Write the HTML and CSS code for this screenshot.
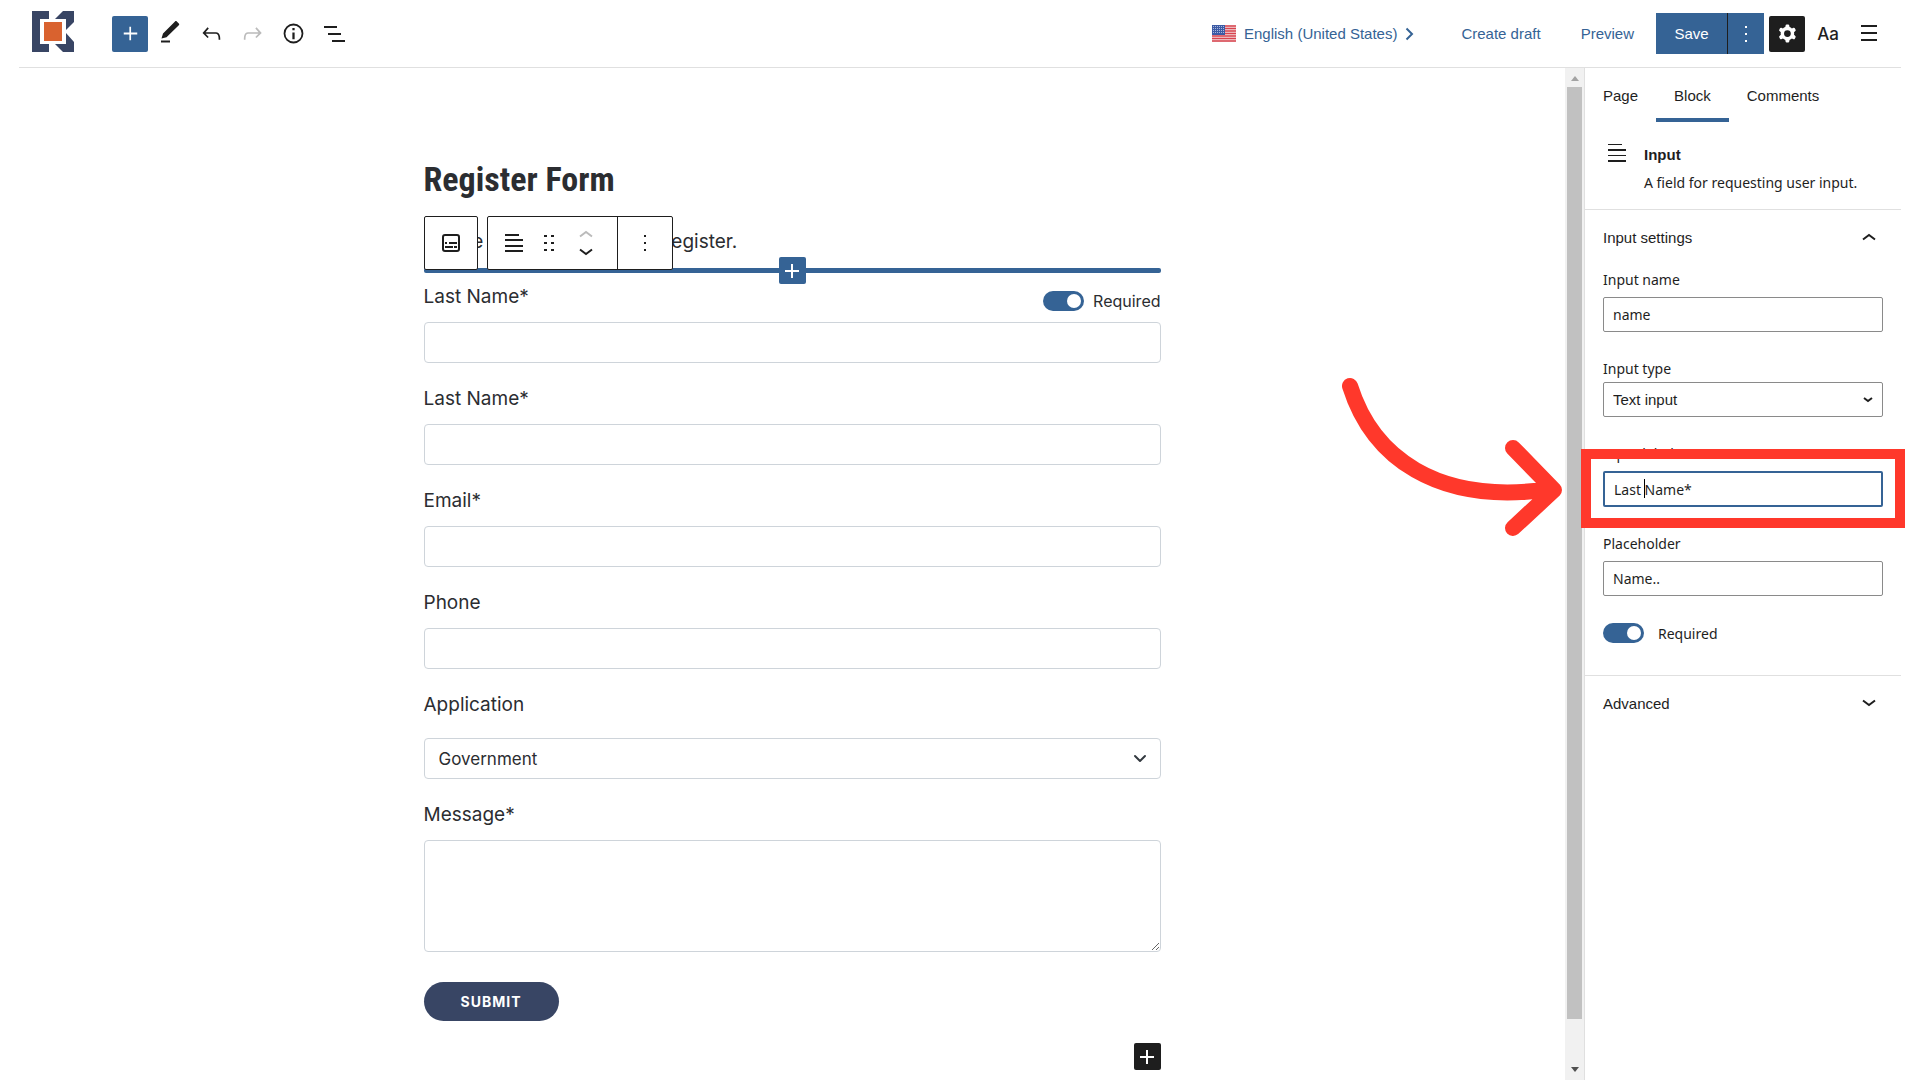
FILE: index.html
```
<!DOCTYPE html>
<html lang="en">
<head>
  <meta charset="UTF-8">
  <meta name="viewport" content="width=device-width, initial-scale=1.0">
  <title>Edit Page - Register Form</title>
  <link rel="stylesheet" href="styles.css">
</head>
<body>
  <header class="topbar">
    <a class="logo" href="#" aria-label="Dashboard">
      <svg width="42" height="42" viewBox="0 0 42 42">
        <path fill="#384564" d="M0 0h17v8H8v25h9v8H0z"/>
        <path fill="#384564" d="M31 0h11v11l-8 8V8H23z"/>
        <path fill="#384564" d="M34 22l8 9v10H31l-8-8h11z"/>
        <path fill="#d9622f" d="M12 11h18v19H12z"/>
      </svg>
    </a>
    <div class="tools">
      <button class="btn-icon btn-add" aria-label="Add block">
        <svg width="27" height="27" viewBox="0 0 24 24"><path d="M11 12.8V18h1.5v-5.2H18v-1.6h-5.5V6H11v5.2H6v1.6z"/></svg>
      </button>
      <button class="btn-icon" aria-label="Tools">
        <svg width="27" height="27" viewBox="0 0 27 27"><path d="M4.500 18.500l1.500-5L18 1.500c.6-.6 1.200-.6 1.800 0l2 2c.6.6.6 1.200 0 1.800L9.500 17.300z"/><path d="M4 20.500h9v2H4z"/></svg>
      </button>
      <button class="btn-icon" aria-label="Undo">
        <svg width="27" height="27" viewBox="0 0 24 24"><path d="M18.300 11.700c-.6-.6-1.400-.9-2.300-.9H6.700l2.900-3.300-1.100-1-4.500 5L8.500 16l1-1-2.700-2.700H16c.5 0 .9.2 1.300.5 1 1 1 3.400 1 4.500v.3h1.500v-.2c0-1.500 0-4.300-1.500-5.700z"/></svg>
      </button>
      <button class="btn-icon" aria-label="Redo" disabled>
        <svg width="27" height="27" viewBox="0 0 24 24"><path d="M15.600 6.500l-1.100 1 2.900 3.300H8c-.9 0-1.700.3-2.300.9-1.400 1.500-1.400 4.200-1.400 5.600v.2h1.500v-.3c0-1.100 0-3.500 1-4.500.3-.3.7-.5 1.300-.5h9.200L14.500 15l1.100 1.100 4.600-4.600-4.600-5z"/></svg>
      </button>
      <button class="btn-icon" aria-label="Details">
        <svg width="27" height="27" viewBox="0 0 24 24"><path fill-rule="evenodd" d="M12 3.200a8.800 8.800 0 100 17.600 8.800 8.800 0 000-17.600zm0 16a7.200 7.200 0 110-14.400 7.200 7.200 0 010 14.400zM11 17h2v-6h-2v6zm0-8h2V7h-2v2z"/></svg>
      </button>
      <button class="btn-icon" aria-label="List view">
        <svg width="27" height="27" viewBox="0 0 27 27"><path d="M3 6h13v2H3zM7 13h13v2H7zM11 20h13v2H11z"/></svg>
      </button>
    </div>

    <div class="actions">
      <button class="btn-link btn-lang">
        <svg class="flag" width="24" height="17" viewBox="0 0 24 17">
          <rect width="24" height="17" rx="1" fill="#f3dcdf"/>
          <path stroke="#d8434e" stroke-width="1.400" d="M0 1h24M0 3.500h24M0 6h24M0 8.500h24M0 11h24M0 13.500h24M0 16h24"/>
          <rect width="13" height="10" fill="#3c5ba5"/>
          <path stroke="#a9b8dc" stroke-dasharray="1 1" d="M1 1.500h11M1 3.500h11M1 5.500h11M1 7.500h11"/>
        </svg>
        English (United States)
        <svg width="9" height="14" viewBox="0 0 9 14"><path fill="none" stroke="currentColor" stroke-width="2" d="M1.500 1.500L7 7l-5.500 5.500"/></svg>
      </button>
      <button class="btn-link btn-draft">Create draft</button>
      <button class="btn-link btn-preview">Preview</button>
      <div class="save-group">
        <button class="btn-save">Save</button>
        <button class="btn-more" aria-label="Save options">
          <svg width="4" height="18" viewBox="0 0 4 18"><path d="M1 1h2v2H1zM1 8h2v2H1zM1 15h2v2H1z"/></svg>
        </button>
      </div>
      <button class="btn-icon btn-settings" aria-label="Settings">
        <svg width="27" height="27" viewBox="0 0 24 24"><path fill-rule="evenodd" d="M10.289 4.836A1 1 0 0111.275 4h1.306a1 1 0 01.987.836l.244 1.466c.787.26 1.503.679 2.108 1.218l1.393-.522a1 1 0 011.216.437l.653 1.130a1 1 0 01-.23 1.273l-1.148.944a6.025 6.025 0 010 2.435l1.149.946a1 1 0 01.23 1.272l-.653 1.130a1 1 0 01-1.216.437l-1.394-.522c-.605.54-1.320.958-2.108 1.218l-.244 1.466a1 1 0 01-.987.836h-1.306a1 1 0 01-.986-.836l-.244-1.466a5.995 5.995 0 01-2.108-1.218l-1.394.522a1 1 0 01-1.217-.436l-.653-1.131a1 1 0 01.23-1.272l1.149-.946a6.026 6.026 0 010-2.435l-1.148-.944a1 1 0 01-.23-1.272l.653-1.131a1 1 0 011.217-.437l1.393.522a5.994 5.994 0 012.108-1.218l.244-1.466zM14.929 12a3 3 0 11-6 0 3 3 0 016 0z"/></svg>
      </button>
      <button class="btn-icon btn-typo" aria-label="Typography">Aa</button>
      <button class="btn-icon" aria-label="Options">
        <svg width="27" height="27" viewBox="0 0 27 27"><path d="M6 5h16v2H6zM6 12h16v2H6zM6 19h16v2H6z"/></svg>
      </button>
    </div>
  </header>

  <div class="editor">
    <main class="canvas">
      <form class="form">
        <h1>Register Form</h1>
        <div class="intro">
          <p>Please fill out your form to register.</p>
          <div class="block-toolbar">
            <div class="toolbar-box">
              <button type="button" class="tb-parent" aria-label="Select parent block">
                <svg width="18" height="18" viewBox="0 0 18 18"><rect x="1" y="1" width="16" height="16" rx="2" fill="none" stroke="currentColor" stroke-width="2"/><path d="M3 8h2v2H3zM7 8h8v2H7zM3 12h8v2H3zM12 12h3v2h-3z"/></svg>
              </button>
            </div>
            <div class="toolbar-box">
              <button type="button" class="tb-type" aria-label="Input block">
                <svg width="20" height="20" viewBox="0 0 20 20"><path d="M1 1h14v2H1zM1 6h18v2H1zM1 12h18v2H1zM1 17h18v2H1z"/></svg>
              </button>
              <button type="button" class="tb-drag" aria-label="Drag">
                <svg width="10" height="18" viewBox="0 0 10 18"><path d="M0 1h3v2H0zM7 1h3v2H7zM0 8h3v2H0zM7 8h3v2H7zM0 15h3v2H0zM7 15h3v2H7z"/></svg>
              </button>
              <div class="tb-movers">
                <button type="button" aria-label="Move up" disabled>
                  <svg width="14" height="8" viewBox="0 0 14 8"><path fill="none" stroke="currentColor" stroke-width="2" d="M1 6.500l6-4.500 6 4.500"/></svg>
                </button>
                <button type="button" aria-label="Move down">
                  <svg width="14" height="8" viewBox="0 0 14 8"><path fill="none" stroke="currentColor" stroke-width="2" d="M1 1.500L7 6l6-4.500"/></svg>
                </button>
              </div>
              <button type="button" class="tb-more" aria-label="Block options">
                <svg width="4" height="18" viewBox="0 0 4 18"><path d="M1 1h2v2H1zM1 8h2v2H1zM1 15h2v2H1z"/></svg>
              </button>
            </div>
          </div>
        </div>
        <div class="insert-line">
          <button type="button" class="btn-plus" aria-label="Insert block">
            <svg width="14" height="14" viewBox="0 0 14 14"><path d="M6 0h2v6h6v2H8v6H6V8H0V6h6z"/></svg>
          </button>
        </div>

        <div class="field">
          <div class="field-head">
            <label for="first">Last Name*</label>
            <label class="toggle"><input type="checkbox" checked> Required</label>
          </div>
          <input type="text" id="first">
        </div>
        <div class="field">
          <label for="last">Last Name*</label>
          <input type="text" id="last">
        </div>
        <div class="field">
          <label for="email">Email*</label>
          <input type="email" id="email">
        </div>
        <div class="field">
          <label for="phone">Phone</label>
          <input type="tel" id="phone">
        </div>
        <div class="field field-select">
          <label for="application">Application</label>
          <div class="select-wrap">
            <select id="application"><option>Government</option></select>
            <svg width="14" height="10" viewBox="0 0 14 10"><path fill="none" stroke="#343a40" stroke-width="2" stroke-linecap="round" stroke-linejoin="round" d="M2 2l5 5 5-5"/></svg>
          </div>
        </div>
        <div class="field">
          <label for="message">Message*</label>
          <textarea id="message"></textarea>
        </div>
        <button type="button" class="btn-submit">SUBMIT</button>
        <button type="button" class="btn-plus btn-append" aria-label="Add block">
          <svg width="14" height="14" viewBox="0 0 14 14"><path d="M6 0h2v6h6v2H8v6H6V8H0V6h6z"/></svg>
        </button>
      </form>

      <svg class="arrow" width="224" height="166" viewBox="0 0 224 166">
        <path d="M11 11c22 70 86 120 201 103M174 73l41 42-41 38"/>
      </svg>
    </main>

    <div class="scrollbar">
      <svg width="8" height="5" viewBox="0 0 8 5"><path fill="#a3a3a3" d="M0 5l4-5 4 5z"/></svg>
      <div class="thumb"></div>
      <svg width="8" height="5" viewBox="0 0 8 5"><path fill="#505050" d="M0 0h8L4 5z"/></svg>
    </div>

    <aside class="sidebar">
      <nav class="tabs">
        <button>Page</button>
        <button class="active">Block</button>
        <button>Comments</button>
      </nav>
      <section class="block-card">
        <svg width="20" height="20" viewBox="0 0 20 20"><path d="M1 1h14v1H1zM1 6h18v2H1zM1 12h18v1H1zM1 17h18v2H1z"/></svg>
        <div>
          <h2>Input</h2>
          <p>A field for requesting user input.</p>
        </div>
      </section>
      <section class="panel">
        <button class="panel-title">
          Input settings
          <svg width="14" height="8" viewBox="0 0 14 8"><path fill="none" stroke="currentColor" stroke-width="2" d="M1 6.500l6-4.500 6 4.500"/></svg>
        </button>
        <div class="panel-body">
          <div class="control">
            <label for="input-name">Input name</label>
            <input type="text" id="input-name" value="name">
          </div>
          <div class="control control-type">
            <label for="input-type">Input type</label>
            <div class="select-wrap">
              <select id="input-type"><option>Text input</option></select>
              <svg width="10" height="6" viewBox="0 0 10 6"><path fill="none" stroke="currentColor" stroke-width="2" d="M1 1l4 3 4-3"/></svg>
            </div>
          </div>
          <div class="control">
            <label for="input-label">Input label</label>
            <input type="text" id="input-label" class="focused" value="Last Name*">
            <span class="caret"></span>
            <div class="highlight"></div>
          </div>
          <div class="control">
            <label for="placeholder">Placeholder</label>
            <input type="text" id="placeholder" value="Name..">
          </div>
          <label class="toggle"><input type="checkbox" checked> Required</label>
        </div>
      </section>
      <section class="panel">
        <button class="panel-title">
          Advanced
          <svg width="14" height="8" viewBox="0 0 14 8"><path fill="none" stroke="currentColor" stroke-width="2" d="M1 1.500L7 6l6-4.500"/></svg>
        </button>
      </section>
    </aside>
  </div>
</body>
</html>
```
FILE: styles.css
```
* {
  box-sizing: border-box;
}

body {
  margin: 0;
  padding: 0 19px;
  height: 100vh;
  overflow: hidden;
  display: flex;
  flex-direction: column;
  background: #fff;
  color: #1e1e1e;
  font-family: "Noto Sans", sans-serif;
  font-size: 14px;
}

button, input, select, textarea {
  font-family: inherit;
  font-size: inherit;
  color: inherit;
}

button {
  padding: 0;
  border: none;
  background: none;
  cursor: pointer;
}

svg {
  display: block;
  flex-shrink: 0;
  fill: currentColor;
}

/* top bar */
.topbar {
  display: flex;
  align-items: center;
  height: 68px;
  flex-shrink: 0;
  padding: 0 15px 0 13px;
  border-bottom: 1px solid #e0e0e0;
  font-family: "Liberation Sans", Arial, sans-serif;
  font-size: 15px;
}

.logo {
  padding-bottom: 4px;
}

.tools {
  display: flex;
  gap: 5px;
  margin-left: 38px;
}

.btn-icon {
  display: flex;
  align-items: center;
  justify-content: center;
  width: 36px;
  height: 36px;
  border-radius: 2px;
}

.btn-icon:disabled {
  color: #bbb;
}

.btn-add {
  margin-right: -1px;
  background: #356395;
  color: #fff;
}

.actions {
  display: flex;
  align-items: center;
  margin-left: auto;
}

.btn-link {
  color: #356395;
}

.btn-lang {
  display: flex;
  align-items: center;
  gap: 8px;
  margin-right: 47px;
}

.btn-draft {
  margin-right: 40px;
}

.btn-preview {
  margin-right: 22px;
}

.save-group {
  display: flex;
  height: 41px;
  margin-right: 5px;
  background: #356395;
  color: #fff;
}

.btn-save {
  width: 71px;
}

.btn-more {
  display: flex;
  align-items: center;
  justify-content: center;
  width: 37px;
  border-left: 1px solid #1e1e1e;
}

.btn-settings {
  background: #1e1e1e;
  color: #fff;
}

.btn-typo {
  margin: 0 4px 0 5px;
  font-family: Inter, sans-serif;
  font-size: 17px;
  font-weight: 500;
}

/* canvas */
.editor {
  display: flex;
  flex: 1;
  min-height: 0;
}

.canvas {
  position: relative;
  flex: 1;
  padding-top: 84px;
}

.form {
  display: flex;
  flex-direction: column;
  width: 48%;
  max-width: 737px;
  margin: 0 auto;
  color: #2b2d31;
  font-family: Inter, sans-serif;
  font-size: 19px;
}

.form h1 {
  margin: 0;
  font-family: "Liberation Sans Narrow", "Roboto Condensed", "DejaVu Sans Condensed", sans-serif;
  font-size: 34px;
  font-weight: bold;
  line-height: 54px;
}

.intro {
  position: relative;
  padding-top: 22px;
}

.intro p {
  margin: 0;
  line-height: 28px;
}

.block-toolbar {
  position: absolute;
  top: 10px;
  left: 0;
  z-index: 2;
  display: flex;
  gap: 9px;
  color: #1e1e1e;
}

.toolbar-box {
  display: flex;
  height: 54px;
  background: #fff;
  border: 1px solid #1e1e1e;
  border-radius: 2px;
}

.toolbar-box button {
  display: flex;
  align-items: center;
  justify-content: center;
}

.toolbar-box button:disabled {
  color: #bbb;
}

.tb-parent {
  width: 52px;
}

.tb-type {
  width: 52px;
}

.tb-drag {
  width: 18px;
}

.tb-movers {
  display: flex;
  flex-direction: column;
  justify-content: center;
  gap: 10px;
  width: 59px;
  padding-left: 21px;
}

.tb-movers button {
  width: 14px;
}

.tb-more {
  width: 55px;
  border-left: 1px solid #1e1e1e;
}

.insert-line {
  display: flex;
  align-items: center;
  justify-content: center;
  height: 5px;
  margin-top: 12px;
  background: #356395;
  border-radius: 2px;
}

.btn-plus {
  display: flex;
  align-items: center;
  justify-content: center;
  width: 27px;
  height: 27px;
  flex-shrink: 0;
  background: #356395;
  color: #fff;
  border-radius: 2px;
}

.insert-line + .field {
  margin-top: 9px;
}

.field {
  display: flex;
  flex-direction: column;
  gap: 10px;
  margin-bottom: 21px;
}

.field label {
  line-height: 30px;
}

.field-head {
  display: flex;
  align-items: flex-end;
  justify-content: space-between;
}

.field input[type="text"],
.field input[type="email"],
.field input[type="tel"],
.field select,
.field textarea {
  display: block;
  width: 100%;
  height: 41px;
  padding: 0 14px;
  background: #fff;
  border: 1px solid #ced4da;
  border-radius: 4px;
}

.field select {
  appearance: none;
  font-size: 17px;
}

.field textarea {
  height: 112px;
  resize: vertical;
}

.field-select {
  gap: 18px;
}

.select-wrap {
  display: flex;
  align-items: center;
}

.select-wrap svg {
  margin-left: -28px;
  pointer-events: none;
}

.toggle {
  display: flex;
  align-items: center;
  gap: 9px;
}

.field .toggle {
  font-size: 16px;
  line-height: 22px;
}

.toggle input {
  appearance: none;
  display: flex;
  align-items: center;
  justify-content: flex-end;
  width: 41px;
  height: 20px;
  margin: 0;
  padding: 3px;
  background: #356395;
  border-radius: 10px;
}

.toggle input::before {
  content: "";
  width: 14px;
  height: 14px;
  background: #fff;
  border-radius: 50%;
}

.btn-submit {
  align-self: flex-start;
  width: 135px;
  height: 39px;
  margin-top: 9px;
  background: #384564;
  border-radius: 20px;
  color: #fff;
  font-size: 14px;
  font-weight: bold;
  letter-spacing: 1px;
}

.btn-append {
  align-self: flex-end;
  margin-top: 22px;
  background: #1e1e1e;
}

.arrow {
  position: absolute;
  top: 307px;
  right: 2px;
  fill: none;
  stroke: #ff382b;
  stroke-width: 16;
  stroke-linecap: round;
  stroke-linejoin: round;
}

/* scrollbar */
.scrollbar {
  display: flex;
  flex-direction: column;
  align-items: center;
  width: 19px;
  padding: 8px 0;
  background: #f1f1f1;
}

.thumb {
  flex: 1;
  width: 15px;
  margin: 6px 0 48px;
  background: #c1c1c1;
}

/* sidebar */
.sidebar {
  width: 317px;
  border-left: 1px solid #e0e0e0;
}

.tabs {
  display: flex;
  height: 54px;
  font-family: "Liberation Sans", Arial, sans-serif;
  font-size: 15px;
}

.tabs button {
  padding: 4px 18px 0;
  border-bottom: 4px solid transparent;
}

.tabs .active {
  border-color: #356395;
}

.block-card {
  display: flex;
  gap: 17px;
  height: 87px;
  padding: 21px 18px 0 22px;
}

.block-card h2 {
  margin: 0;
  font-family: "Liberation Sans", Arial, sans-serif;
  font-size: 15px;
  line-height: 23px;
}

.block-card p {
  margin: 5px 0 0;
  line-height: 24px;
}

.panel {
  padding: 0 18px;
  border-top: 1px solid #e0e0e0;
}

.panel-title {
  display: flex;
  align-items: center;
  justify-content: space-between;
  width: 100%;
  height: 54px;
  padding-right: 7px;
  font-family: "Liberation Sans", Arial, sans-serif;
  font-size: 15px;
}

.panel-body {
  padding: 4px 0 32px;
}

.control {
  position: relative;
  margin-bottom: 25px;
}

.control label {
  display: block;
  margin-bottom: 5px;
  line-height: 24px;
}

.control input,
.control select {
  display: block;
  width: 100%;
  height: 35px;
  padding: 0 9px;
  background: #fff;
  border: 1px solid #8a8a8a;
  border-radius: 2px;
}

.control select {
  appearance: none;
  font-family: "Liberation Sans", Arial, sans-serif;
  font-size: 15px;
}

.control-type label {
  margin-bottom: 1px;
}

.control .select-wrap svg {
  margin-left: -20px;
}

.control input.focused {
  height: 36px;
  border: 2px solid #356395;
  outline: none;
}

.caret {
  position: absolute;
  top: 37px;
  left: 41px;
  width: 1px;
  height: 19px;
  background: #000;
}

.highlight {
  position: absolute;
  top: 7px;
  left: -22px;
  right: -22px;
  height: 79px;
  border: 10px solid #ff382b;
  pointer-events: none;
}

.panel .toggle {
  gap: 14px;
  padding-top: 2px;
}
```
